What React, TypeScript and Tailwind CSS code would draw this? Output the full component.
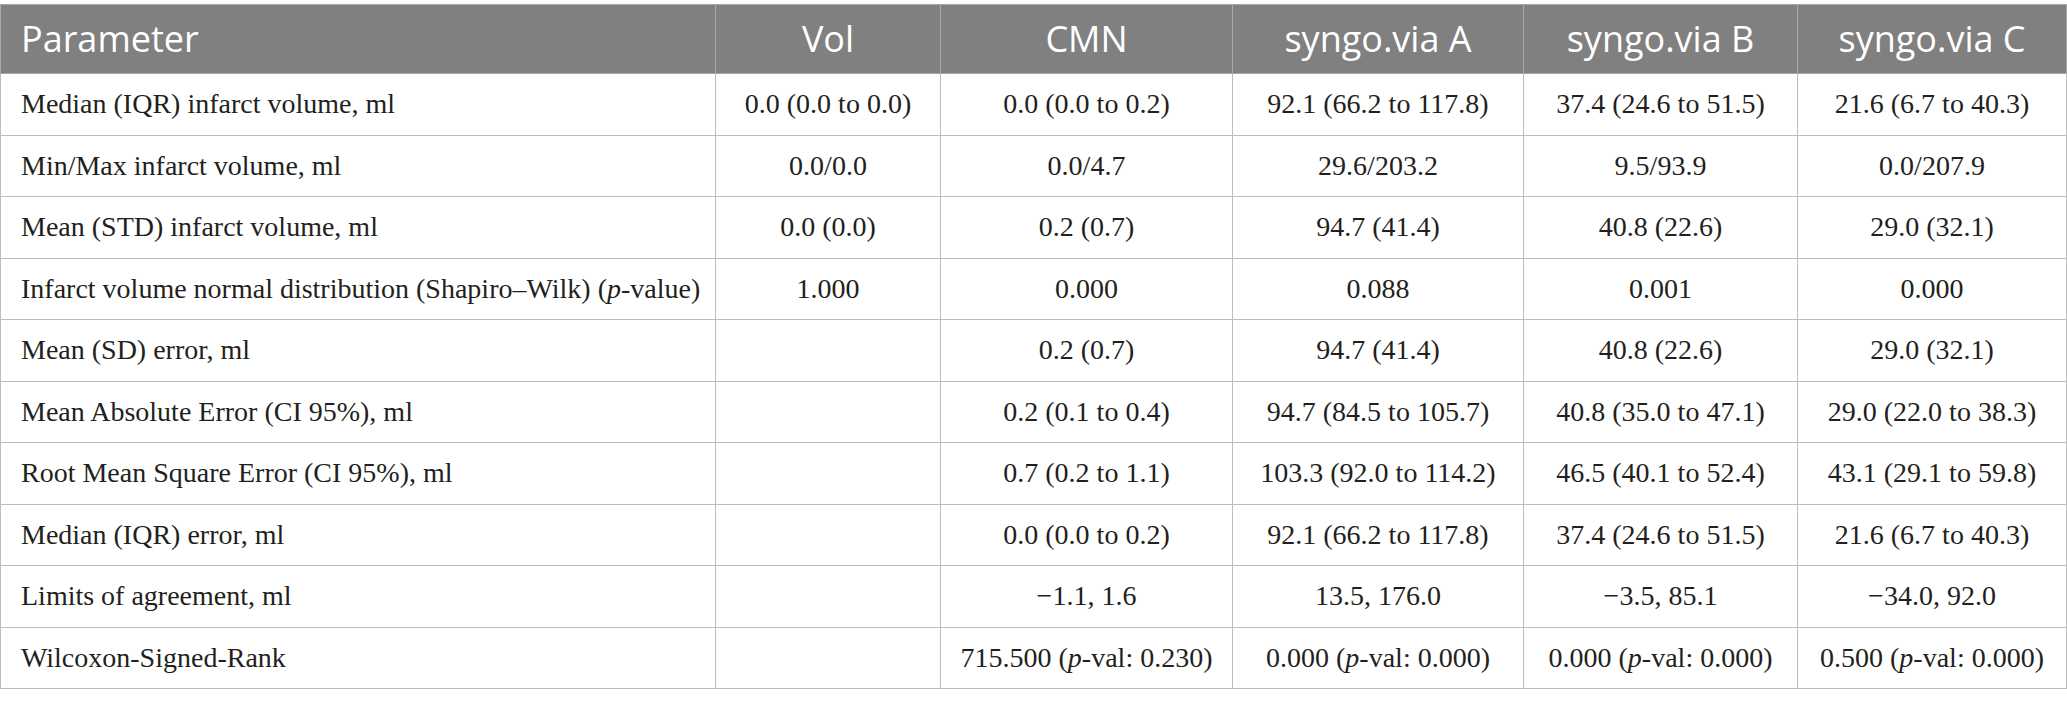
import React from "react";

const serif = { fontFamily: '"Liberation Serif", "Times New Roman", serif' };

type Cell = React.ReactNode;

const P = () => <i>p</i>;

const rows: Cell[][] = [
  ["Median (IQR) infarct volume, ml", "0.0 (0.0 to 0.0)", "0.0 (0.0 to 0.2)", "92.1 (66.2 to 117.8)", "37.4 (24.6 to 51.5)", "21.6 (6.7 to 40.3)"],
  ["Min/Max infarct volume, ml", "0.0/0.0", "0.0/4.7", "29.6/203.2", "9.5/93.9", "0.0/207.9"],
  ["Mean (STD) infarct volume, ml", "0.0 (0.0)", "0.2 (0.7)", "94.7 (41.4)", "40.8 (22.6)", "29.0 (32.1)"],
  [<>Infarct volume normal distribution (Shapiro–Wilk) (<P />-value)</>, "1.000", "0.000", "0.088", "0.001", "0.000"],
  ["Mean (SD) error, ml", "", "0.2 (0.7)", "94.7 (41.4)", "40.8 (22.6)", "29.0 (32.1)"],
  ["Mean Absolute Error (CI 95%), ml", "", "0.2 (0.1 to 0.4)", "94.7 (84.5 to 105.7)", "40.8 (35.0 to 47.1)", "29.0 (22.0 to 38.3)"],
  ["Root Mean Square Error (CI 95%), ml", "", "0.7 (0.2 to 1.1)", "103.3 (92.0 to 114.2)", "46.5 (40.1 to 52.4)", "43.1 (29.1 to 59.8)"],
  ["Median (IQR) error, ml", "", "0.0 (0.0 to 0.2)", "92.1 (66.2 to 117.8)", "37.4 (24.6 to 51.5)", "21.6 (6.7 to 40.3)"],
  ["Limits of agreement, ml", "", "\u22121.1, 1.6", "13.5, 176.0", "\u22123.5, 85.1", "\u221234.0, 92.0"],
  ["Wilcoxon-Signed-Rank", "", <>715.500 (<P />-val: 0.230)</>, <>0.000 (<P />-val: 0.000)</>, <>0.000 (<P />-val: 0.000)</>, <>0.500 (<P />-val: 0.000)</>],
];

const headers = ["Parameter", "Vol", "CMN", "syngo.via A", "syngo.via B", "syngo.via C"];
const widths = ["w-[715px]", "w-[225px]", "w-[292px]", "w-[291px]", "w-[274px]", "w-[269px]"];

export default function App() {
  return (
    <div className="bg-white w-[2067px] h-[706px] pt-[4px]">
      <table className="border-collapse w-[2066px] table-fixed">
        <colgroup>
          {widths.map((w, i) => (
            <col key={i} className={w} />
          ))}
        </colgroup>
        <thead>
          <tr className="h-[69px] bg-[#7f807f]">
            {headers.map((h, i) => (
              <th
                key={i}
                className={`border border-[#a9aaa9] font-normal text-white text-[36px] ${i === 0 ? "text-left pl-[20px]" : "text-center"}`}
                style={{ fontFamily: '"Open Sans", "Noto Sans", sans-serif' }}
              >
                {h}
              </th>
            ))}
          </tr>
        </thead>
        <tbody>
          {rows.map((r, ri) => (
            <tr key={ri} className="h-[61.5px]">
              {r.map((c, ci) => (
                <td
                  key={ci}
                  className={`border border-[#bdbdbd] text-[#231f20] text-[28px] ${ci === 0 ? "text-left pl-[20px]" : "text-center"}`}
                  style={serif}
                >
                  {c}
                </td>
              ))}
            </tr>
          ))}
        </tbody>
      </table>
    </div>
  );
}
